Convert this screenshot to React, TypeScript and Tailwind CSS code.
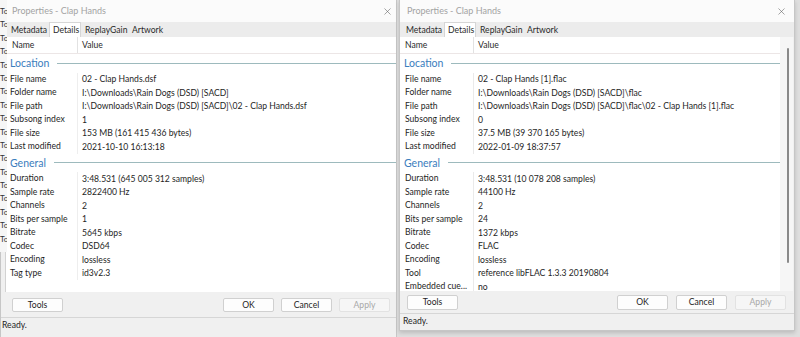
import { X } from 'lucide-react';

type Row = [string, string];

const leftLocation: Row[] = [
  ['File name', '02 - Clap Hands.dsf'],
  ['Folder name', 'I:\\Downloads\\Rain Dogs (DSD) [SACD]'],
  ['File path', 'I:\\Downloads\\Rain Dogs (DSD) [SACD]\\02 - Clap Hands.dsf'],
  ['Subsong index', '1'],
  ['File size', '153 MB (161 415 436 bytes)'],
  ['Last modified', '2021-10-10 16:13:18'],
];

const leftGeneral: Row[] = [
  ['Duration', '3:48.531 (645 005 312 samples)'],
  ['Sample rate', '2822400 Hz'],
  ['Channels', '2'],
  ['Bits per sample', '1'],
  ['Bitrate', '5645 kbps'],
  ['Codec', 'DSD64'],
  ['Encoding', 'lossless'],
  ['Tag type', 'id3v2.3'],
];

const rightLocation: Row[] = [
  ['File name', '02 - Clap Hands [1].flac'],
  ['Folder name', 'I:\\Downloads\\Rain Dogs (DSD) [SACD]\\flac'],
  ['File path', 'I:\\Downloads\\Rain Dogs (DSD) [SACD]\\flac\\02 - Clap Hands [1].flac'],
  ['Subsong index', '0'],
  ['File size', '37.5 MB (39 370 165 bytes)'],
  ['Last modified', '2022-01-09 18:37:57'],
];

const rightGeneral: Row[] = [
  ['Duration', '3:48.531 (10 078 208 samples)'],
  ['Sample rate', '44100 Hz'],
  ['Channels', '2'],
  ['Bits per sample', '24'],
  ['Bitrate', '1372 kbps'],
  ['Codec', 'FLAC'],
  ['Encoding', 'lossless'],
  ['Tool', 'reference libFLAC 1.3.3 20190804'],
  ['Embedded cue...', 'no'],
];

function Group({ name }: { name: string }) {
  return (
    <div className="flex h-[18.5px] shrink-0 items-center pl-[4px]">
      <span className="text-[10.5px] leading-none text-[#3b7dbd]">{name}</span>
      <div className="ml-[8px] h-px flex-1 bg-[#9dbabd]" />
    </div>
  );
}

function Line({ row, labelClass }: { row: Row; labelClass: string }) {
  return (
    <div className="flex h-[13.5px] shrink-0 items-center whitespace-nowrap">
      <div className={labelClass}>{row[0]}</div>
      <div className="pl-[4px] leading-[12px] text-[#1e1e1e]">{row[1]}</div>
    </div>
  );
}

function Btn({ label, disabled }: { label: string; disabled?: boolean }) {
  return (
    <div
      className={
        disabled
          ? 'flex h-full w-[51px] items-center justify-center rounded-[2px] border border-[#e2e2e2] bg-[#f6f6f6] text-[#a8a8a8]'
          : 'flex h-full w-[51px] items-center justify-center rounded-[2px] border border-[#d0d0d0] bg-[#fdfdfd] text-[#1e1e1e]'
      }
    >
      {label}
    </div>
  );
}

function Tabs() {
  return (
    <>
      <div className="w-[42px] pl-[4px] leading-[14px] text-[#2a2a2a]">Metadata</div>
      <div className="w-[32px] border-x border-t border-[#d6d6d6] bg-white pl-[3px] leading-[14px] text-[#2a2a2a]">Details</div>
      <div className="w-[47px] pl-[4px] leading-[14px] text-[#2a2a2a]">ReplayGain</div>
      <div className="w-[36px] pl-[4px] leading-[14px] text-[#2a2a2a]">Artwork</div>
    </>
  );
}

function LeftWindow() {
  const label = 'h-full w-[72px] border-r border-[#eeeeee] pl-[4px] leading-[13.5px] text-[#1e1e1e]';
  return (
    <div className="flex h-[337px] w-[397px] shrink-0 flex-col border-x border-[#c6c6c6] bg-[#f0f0f0]">
      <div className="flex h-[22px] shrink-0 items-center justify-between bg-[#fbfbfb] pl-[11px] pr-[3px]">
        <span className="text-[9px] text-[#a3a3a3]">Properties - Clap Hands</span>
        <X size={11} strokeWidth={1.2} className="text-[#5a5a5a]" />
      </div>
      <div className="flex h-[15px] shrink-0 items-end bg-[#ececec] pl-[6px]">
        <Tabs />
      </div>
      <div className="ml-[4px] flex h-[255px] shrink-0 flex-col overflow-hidden border-l border-[#d2d2d2] bg-white">
        <div className="flex h-[17px] shrink-0 items-center border-b border-[#ece6e6]">
          <div className="flex h-full w-[72px] items-center border-r border-[#e2e2e2] pl-[6px] text-[#2a2a2a]">Name</div>
          <div className="pl-[4px] text-[#2a2a2a]">Value</div>
        </div>
        <Group name="Location" />
        {leftLocation.map((r) => (
          <Line key={r[0]} row={r} labelClass={label} />
        ))}
        <Group name="General" />
        {leftGeneral.map((r) => (
          <Line key={r[0]} row={r} labelClass={label} />
        ))}
      </div>
      <div className="flex h-[25px] shrink-0 pl-[11px] pr-[6px] pt-[6px]">
        <div className="h-[14px]">
          <Btn label="Tools" />
        </div>
        <div className="ml-auto flex h-[14px] gap-[7px]">
          <Btn label="OK" />
          <Btn label="Cancel" />
          <Btn label="Apply" disabled />
        </div>
      </div>
      <div className="flex h-[15px] shrink-0 items-center border-t border-[#d6d6d6] pl-[1px] text-[#1e1e1e]">Ready.</div>
    </div>
  );
}

function RightWindow() {
  const label = 'h-full w-[74px] border-r border-[#eaeaea] pl-[5px] leading-[13.5px] text-[#1e1e1e]';
  return (
    <div className="flex h-[331px] w-[396px] shrink-0 flex-col border-x border-b border-[#c6c6c6] bg-[#f0f0f0] shadow-[0_2px_4px_rgba(0,0,0,0.15)]">
      <div className="flex h-[22px] shrink-0 items-center justify-between bg-[#fbfbfb] pl-[7px] pr-[7px]">
        <span className="text-[9px] text-[#a3a3a3]">Properties - Clap Hands</span>
        <X size={11} strokeWidth={1.2} className="text-[#5a5a5a]" />
      </div>
      <div className="flex h-[15px] shrink-0 items-end bg-[#ececec] pl-[2px]">
        <Tabs />
      </div>
      <div className="mr-[1px] flex h-[254px] shrink-0 overflow-hidden">
        <div className="flex flex-1 flex-col overflow-hidden bg-white">
          <div className="flex h-[17px] shrink-0 items-center border-b border-[#ece6e6]">
            <div className="flex h-full w-[74px] items-center border-r border-[#e2e2e2] pl-[5px] text-[#2a2a2a]">Name</div>
            <div className="pl-[4px] text-[#2a2a2a]">Value</div>
          </div>
          <Group name="Location" />
          {rightLocation.map((r) => (
            <Line key={r[0]} row={r} labelClass={label} />
          ))}
          <Group name="General" />
          {rightGeneral.map((r) => (
            <Line key={r[0]} row={r} labelClass={label} />
          ))}
        </div>
        <div className="w-[13px] shrink-0 bg-[#f6f6f6]">
          <div className="ml-[7px] mt-[11px] h-[215px] w-[2px] rounded-full bg-[#8a8a8a]" />
        </div>
      </div>
      <div className="flex h-[22px] shrink-0 pl-[7px] pr-[8px] pt-[4px]">
        <div className="h-[15px]">
          <Btn label="Tools" />
        </div>
        <div className="ml-auto flex h-[15px] gap-[8px]">
          <Btn label="OK" />
          <Btn label="Cancel" />
          <Btn label="Apply" disabled />
        </div>
      </div>
      <div className="flex h-[16px] shrink-0 items-center border-t border-[#d6d6d6] pl-[3px] text-[#1e1e1e]">Ready.</div>
    </div>
  );
}

export default function App() {
  const behind = Array.from({ length: 18 });
  return (
    <div className="relative flex h-[337px] w-[800px] gap-[2px] overflow-hidden bg-[#dedede] font-['Lato',sans-serif] text-[8.6px]">
      <LeftWindow />
      <RightWindow />
      <div className="absolute left-0 top-0 h-[252px] w-[7px] overflow-hidden bg-[#f6f6f6] pt-[5px]">
        {behind.map((_, i) => (
          <div key={i} className="h-[13.4px] text-[8px] leading-[13.4px] text-[#333]">
            To
          </div>
        ))}
      </div>
    </div>
  );
}
